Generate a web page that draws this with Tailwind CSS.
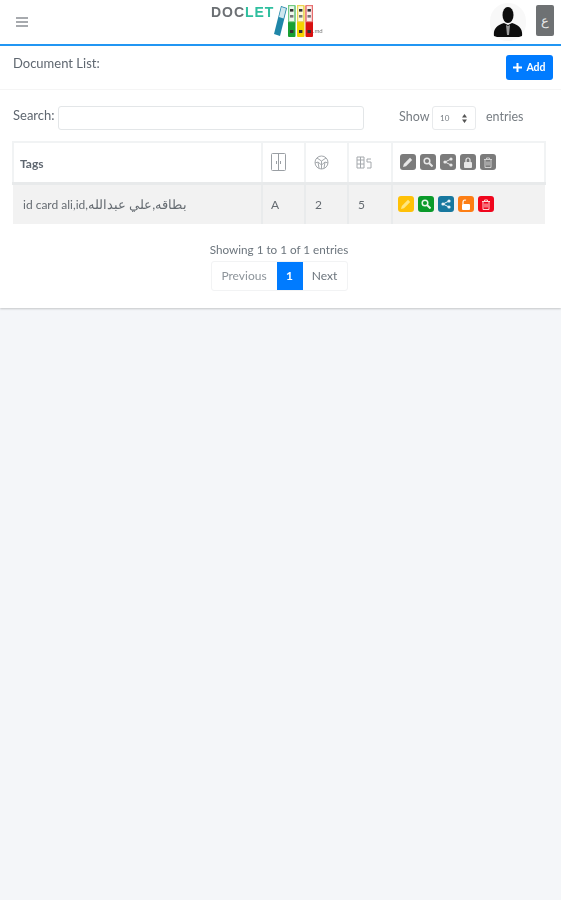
<!DOCTYPE html>
<html lang="en">
<head>
<meta charset="utf-8">
<script src="https://cdn.jsdelivr.net/npm/@tailwindcss/browser@4"></script>
<title>Document List</title>
</head>
<body class="bg-[#f4f6f9] font-['Lato','Noto_Sans',sans-serif] text-[#6c757d] text-[12px] h-[900px] overflow-hidden">
<div class="blur-[0.55px]">
  <header class="h-[46px] bg-white border-b-2 border-[#2196f3] flex items-center relative">
    <svg class="ml-[16px] w-[12px] h-[10px]" viewBox="0 0 12 10"><path d="M0 1h12M0 5h12M0 9h12" stroke="#8a8f94" stroke-width="1.3"/></svg>
    <div class="absolute left-[211px] top-0 w-[120px] h-[44px]">
      <div class="absolute left-0 top-[3px] font-['Liberation_Sans',sans-serif] font-bold text-[14px] leading-[18px] tracking-[0.95px] text-[#6b6f73]">DOC<span class="text-[#2fbf9f]">LET</span></div>
      <svg class="absolute left-[62px] top-[3px] w-[40px] h-[35px]" viewBox="0 0 40 35">
        <path d="M8 3l6 2-7 28-6-2z" fill="#1f86a8"/>
        <path d="M8.5 4l4.5 1.5-2.5 10-4.5-1.5z" fill="#cfe6ee"/>
        <rect x="15" y="2" width="7.5" height="32" rx="1" fill="#19a033"/><rect x="15.7" y="2.7" width="6" height="16" fill="#eef8ee" stroke="#7ccf8b"/><rect x="17" y="6" width="3.4" height="2.6" fill="#333"/><rect x="17" y="12" width="3.4" height="2.6" fill="#777"/><rect x="17" y="27" width="3.4" height="3" fill="#333"/>
        <rect x="24" y="2" width="7.5" height="32" rx="1" fill="#f5d400"/><rect x="24.7" y="2.7" width="6" height="16" fill="#fdf9d8" stroke="#e6d35a"/><rect x="26" y="6" width="3.4" height="2.6" fill="#333"/><rect x="26" y="12" width="3.4" height="2.6" fill="#777"/><rect x="26" y="27" width="3.4" height="3" fill="#333"/>
        <rect x="32.5" y="2" width="7.5" height="32" rx="1" fill="#d81010"/><rect x="33.2" y="2.7" width="6" height="16" fill="#fdeeee" stroke="#e88080"/><rect x="34.5" y="6" width="3.4" height="2.6" fill="#333"/><rect x="34.5" y="12" width="3.4" height="2.6" fill="#777"/><rect x="34.5" y="27" width="3.4" height="3" fill="#333"/>
      </svg>
      <span class="absolute left-[102px] top-[27px] text-[6px] leading-[8px] text-[#777]">.md</span>
    </div>
    <div class="absolute left-[490px] top-[3px] w-[36px] h-[38px] rounded-full bg-[#f8f8f8] flex items-center justify-center">
      <svg class="w-[30px] h-[30px]" viewBox="0 0 30 30"><ellipse cx="15" cy="8" rx="5.5" ry="8" fill="#0d0d0d"/><path d="M1 29c-1-7 3-11 10-13l4 2 4-2c7 2 11 6 10 13l-3 1H4z" fill="#0d0d0d"/><path d="M13 18l2 1 2-1-1 10h-2z" fill="#9a9a9a"/></svg>
    </div>
    <div class="absolute left-[536px] top-[5px] w-[18px] h-[31px] rounded-[2px] bg-[#6e7173] text-[#e8e8e8] text-[13px] flex items-center justify-center">ع</div>
  </header>

  <main class="bg-white h-[262px] shadow-[0_1px_2px_rgba(0,0,0,0.2)]">
    <div class="h-[44px] border-b border-[#f5f5f5] flex justify-between items-start pl-[13px] pr-[8px]">
      <h1 class="mt-[9px] text-[13px] leading-[16px] font-normal text-[#5f6770]">Document List:</h1>
      <button class="mt-[9px] w-[47px] h-[25px] rounded-[3px] bg-[#007bff] text-white text-[10.5px] font-bold flex items-center justify-center gap-[4px]">
        <svg class="w-[9px] h-[9px]" viewBox="0 0 9 9"><path d="M4.5 0v9M0 4.5h9" stroke="#fff" stroke-width="2"/></svg>Add
      </button>
    </div>

    <div class="flex items-center h-[51px] pl-[13px] pt-[5px]">
      <label class="text-[13px] text-[#5f6770] w-[45px] mb-[4px]">Search:</label>
      <input class="w-[306px] h-[24px] border border-[#e3e6e8] rounded-[3px] bg-white" type="text" aria-label="Search">
      <span class="ml-[35px] text-[12.5px] w-[33px] text-[#777d83] mb-[2px]">Show</span>
      <div class="w-[44px] h-[24px] border border-[#e8eaec] rounded-[3px] flex items-center justify-between pl-[7px] pr-[8px] text-[8px] text-[#777d83]">
        <span>10</span>
        <svg class="w-[5px] h-[9px]" viewBox="0 0 5 9"><path d="M2.5 0L5 3.5H0zM2.5 9L0 5.5h5z" fill="#555"/></svg>
      </div>
      <span class="ml-[10px] text-[12.5px] text-[#777d83] mb-[1px]">entries</span>
    </div>

    <div class="pl-[12px]">
      <table class="w-[532px] table-fixed border-collapse">
        <colgroup><col class="w-[249px]"><col class="w-[43px]"><col class="w-[43px]"><col class="w-[44px]"><col class="w-[153px]"></colgroup>
        <thead>
          <tr class="h-[41px] border-2 border-[#f1f3f4] border-b-[3px] border-b-[#e8eaeb]">
            <th class="text-left pl-[6px] pt-[4px] text-[12px] font-bold text-[#5f6770] border-r-2 border-[#f1f3f4]">Tags</th>
            <th class="border-r-2 border-[#f1f3f4]">
              <svg class="ml-[8px] w-[15px] h-[18px]" viewBox="0 0 15 18" fill="none" stroke="#9a9fa4" stroke-width="1"><rect x=".5" y=".5" width="14" height="17" rx="1"/><path d="M7.5 1v16M5.5 8v3M9.5 8v3"/></svg>
            </th>
            <th class="border-r-2 border-[#f1f3f4]">
              <svg class="ml-[8px] w-[15px] h-[15px]" viewBox="0 0 15 15" fill="none" stroke="#a4a8ac" stroke-width="1"><circle cx="7.5" cy="7.5" r="6.5"/><path d="M3 3l4.5 3L12 3M1 8l3-1 3.5 3 3.5-3 3 1M7.5 6v8M4 7l1 6M11 7l-1 6"/></svg>
            </th>
            <th class="border-r-2 border-[#f1f3f4]">
              <svg class="ml-[7px] w-[16px] h-[13px]" viewBox="0 0 16 13" fill="none" stroke="#a4a8ac" stroke-width="1"><path d="M1 1h7v11H1zM1 4h7M1 8h7M4.5 1v11"/><path d="M15 3h-4v3h4v6h-4"/></svg>
            </th>
            <th class="text-left pl-[7px]">
              <div class="flex gap-[4px]">
                <span class="w-[16px] h-[16px] rounded-[3px] bg-[#7b7b7b] flex items-center justify-center"><svg class="w-[10px] h-[10px]" viewBox="0 0 10 10"><path d="M0 10l.8-3L7 .8 9.2 3 3 9.2z" fill="#e8e8e8"/></svg></span>
                <span class="w-[16px] h-[16px] rounded-[3px] bg-[#7b7b7b] flex items-center justify-center"><svg class="w-[10px] h-[10px]" viewBox="0 0 10 10" fill="none" stroke="#e8e8e8" stroke-width="1.5"><circle cx="4" cy="4" r="2.8"/><path d="M6 6l3.5 3.5" stroke-width="2"/></svg></span>
                <span class="w-[16px] h-[16px] rounded-[3px] bg-[#7b7b7b] flex items-center justify-center"><svg class="w-[10px] h-[10px]" viewBox="0 0 10 10"><path d="M8 2L2 5l6 3" fill="none" stroke="#e8e8e8"/><circle cx="8" cy="2" r="1.6" fill="#e8e8e8"/><circle cx="2" cy="5" r="1.6" fill="#e8e8e8"/><circle cx="8" cy="8" r="1.6" fill="#e8e8e8"/></svg></span>
                <span class="w-[16px] h-[16px] rounded-[3px] bg-[#7b7b7b] flex items-center justify-center"><svg class="w-[10px] h-[11px]" viewBox="0 0 10 11"><path d="M3 5V3a2 2 0 014 0v2" fill="none" stroke="#e8e8e8" stroke-width="1.2"/><rect x="1" y="5" width="8" height="6" rx="1" fill="#e8e8e8"/></svg></span>
                <span class="w-[16px] h-[16px] rounded-[3px] bg-[#7b7b7b] flex items-center justify-center"><svg class="w-[10px] h-[11px]" viewBox="0 0 10 11" fill="none" stroke="#d0d0d0"><path d="M1 2.5h8M3.5 2.5V1h3v1.5M2 2.5v8h6v-8M4 4.5v4M6 4.5v4"/></svg></span>
              </div>
            </th>
          </tr>
        </thead>
        <tbody>
          <tr class="h-[41px] bg-[#f2f2f2] text-[12px] text-[#666c72]">
            <td class="pl-[10px] pt-[1px] border-r-2 border-[#e9ebec] whitespace-nowrap">id card ali,id,<span class="text-[13px]">بطاقه,علي عبدالله</span></td>
            <td class="pl-[8px] pt-[1px] border-r-2 border-[#e9ebec]">A</td>
            <td class="pl-[9px] pt-[1px] border-r-2 border-[#e9ebec]">2</td>
            <td class="pl-[9px] pt-[1px] border-r-2 border-[#e9ebec]">5</td>
            <td class="pl-[5px]">
              <div class="flex gap-[4px]">
                <span class="w-[16px] h-[16px] rounded-[3px] bg-[#ffc107] flex items-center justify-center"><svg class="w-[10px] h-[10px]" viewBox="0 0 10 10"><path d="M0 10l.8-3L7 .8 9.2 3 3 9.2z" fill="#ffe680"/></svg></span>
                <span class="w-[16px] h-[16px] rounded-[3px] bg-[#0a9a2a] flex items-center justify-center"><svg class="w-[10px] h-[10px]" viewBox="0 0 10 10" fill="none" stroke="#e8f5e8" stroke-width="1.5"><circle cx="4" cy="4" r="2.8"/><path d="M6 6l3.5 3.5" stroke-width="2"/></svg></span>
                <span class="w-[16px] h-[16px] rounded-[3px] bg-[#17789f] flex items-center justify-center"><svg class="w-[10px] h-[10px]" viewBox="0 0 10 10"><path d="M8 2L2 5l6 3" fill="none" stroke="#e8f3f8"/><circle cx="8" cy="2" r="1.6" fill="#e8f3f8"/><circle cx="2" cy="5" r="1.6" fill="#e8f3f8"/><circle cx="8" cy="8" r="1.6" fill="#e8f3f8"/></svg></span>
                <span class="w-[16px] h-[16px] rounded-[3px] bg-[#fd7e14] flex items-center justify-center"><svg class="w-[10px] h-[11px]" viewBox="0 0 10 11"><path d="M2 5V3a2 2 0 013-1.7" fill="none" stroke="#fff" stroke-width="1.2"/><rect x="1" y="5" width="8" height="6" rx="1" fill="#fff"/></svg></span>
                <span class="w-[16px] h-[16px] rounded-[3px] bg-[#f0061d] flex items-center justify-center"><svg class="w-[10px] h-[11px]" viewBox="0 0 10 11" fill="none" stroke="#ffd5d5"><path d="M1 2.5h8M3.5 2.5V1h3v1.5M2 2.5v8h6v-8M4 4.5v4M6 4.5v4"/></svg></span>
              </div>
            </td>
          </tr>
        </tbody>
      </table>
    </div>

    <div class="pl-[13px] w-[545px] flex flex-col items-center">
      <div class="mt-[18px] text-[11.7px] leading-[14px] text-[#6c757d]">Showing 1 to 1 of 1 entries</div>
      <div class="mt-[5px] h-[30px] flex items-stretch border border-[#f2f3f4] rounded-[3px] text-[12px] text-[#8d949a]">
        <span class="w-[65px] flex items-center justify-center">Previous</span>
        <span class="w-[26px] bg-[#007bff] text-white font-bold flex items-center justify-center">1</span>
        <span class="w-[44px] flex items-center justify-center text-[#6c757d]">Next</span>
      </div>
    </div>
  </main>
</div>
</body>
</html>
